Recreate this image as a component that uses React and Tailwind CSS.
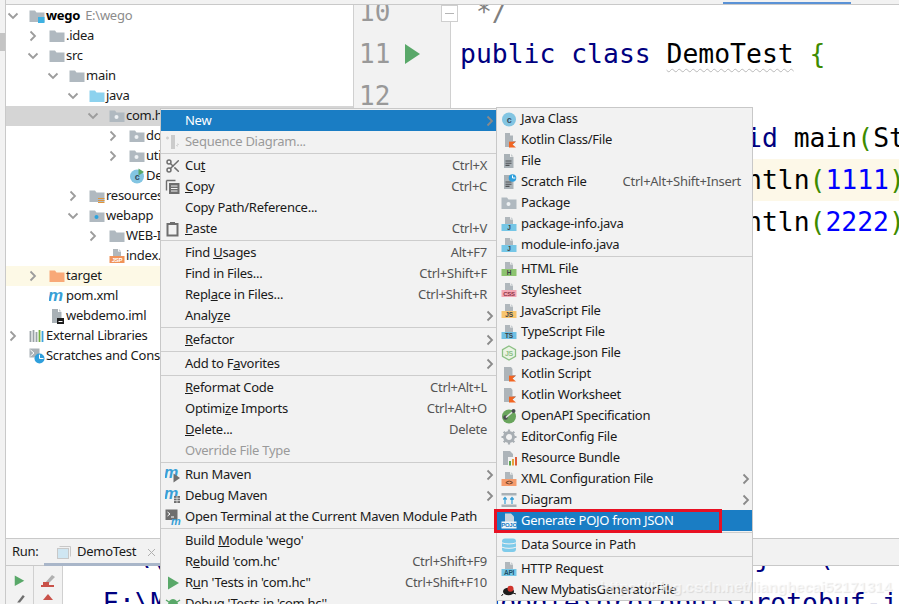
import React from 'react';
import { Scissors } from 'lucide-react';

const Chevron = ({ down, className = 'stroke-[#9c9c9c]' }) => (
  <svg width="12" height="12" viewBox="0 0 12 12" fill="none" className={className} strokeWidth="1.8">
    <path d={down ? 'M1.5 3.5 6 8l4.5-4.5' : 'M3.5 1.5 8 6l-4.5 4.5'} />
  </svg>
);

const Icon = ({ children }) => (
  <svg width="16" height="16" viewBox="0 0 16 16" className="shrink-0 font-[Liberation_Sans,sans-serif]">
    {children}
  </svg>
);

const folderPath = 'M0.5 2.5h5.5l1.5 2h8v9.5H0.5z';

const Folder = ({ fill = '#b0b9c0', children }) => (
  <Icon>
    <path d={folderPath} fill={fill} />
    {children}
  </Icon>
);

const PackageFolder = () => (
  <Folder>
    <circle cx="7.5" cy="9" r="2" fill="#eef1f3" />
  </Folder>
);

const docTop = (
  <>
    <path d="M4 1h5v2.5h3V8H4z" fill="#b0b7bc" />
    <path d="M9.8 1 12 3H9.8z" fill="#c9ced2" />
  </>
);

const Band = ({ fill, label, color = '#3c4043', size = 6.5 }) => (
  <Icon>
    {docTop}
    <rect x="0.5" y="8" width="15" height="7" fill={fill} />
    <text x="8" y="14" fontSize={size} fontWeight="700" fill={color} textAnchor="middle">{label}</text>
  </Icon>
);

const GrayDoc = ({ children }) => (
  <Icon>
    <path d="M3 1h6v3h3.5v11H3z" fill="#a9b1b6" />
    <path d="M10 1l2.5 2.5H10z" fill="#c4c9cc" />
    {children}
  </Icon>
);

const docLines = (
  <path d="M4.5 8h6M4.5 10.2h6M4.5 12.4h4" stroke="#4f5255" strokeWidth="1.1" />
);

const JavaClass = ({ run }) => (
  <Icon>
    <circle cx="8" cy="8.5" r="7" fill="#83c5e2" />
    <text x="8" y="11.5" fontSize="9" fontWeight="700" fill="#35495a" textAnchor="middle">c</text>
    {run && <path d="M9.5 0.5 15 4l-5.5 3.5z" fill="#59a869" />}
  </Icon>
);

const KotlinMark = () => (
  <path d="M8 15.5V9.5h7L11.5 12.5 15 15.5z" fill="#f26522" />
);

const KotlinDoc = ({ script }) => (
  <Icon>
    <path d={script ? 'M3 1h7l1.5 2v6H8v6H3z' : 'M4 1h5v2.5h3V9H8v6H4z'} fill="#adb4b9" />
    <path d="M8 15.5 15 9.5H8z" fill="#3c99dc" />
    <KotlinMark />
  </Icon>
);

const MavenM = ({ size = 13, x = 0, y = 12 }) => (
  <text x={x} y={y} fontSize={size} fontWeight="700" fontStyle="italic" fill="#389fd6">m</text>
);

const Clock = ({ cx, cy, r }) => (
  <>
    <circle cx={cx} cy={cy} r={r} fill="#2f9fdc" />
    <path d={`M${cx} ${cy - r + 1.2}V${cy}h${r - 1}`} stroke="#fff" strokeWidth="1" fill="none" />
  </>
);

const treeRows = [
  { pad: 'pl-0', open: true, icon: <Folder><rect x="9" y="9" width="6.5" height="6" fill="#3eb1e2" /></Folder>, text: <><b className="font-bold text-black">wego</b><span className="ml-[5px] text-[#8c8c8c]">E:\wego</span></> },
  { pad: 'pl-[20px]', closed: true, icon: <Folder />, text: '.idea' },
  { pad: 'pl-[20px]', open: true, icon: <Folder />, text: 'src' },
  { pad: 'pl-[40px]', open: true, icon: <Folder />, text: 'main' },
  { pad: 'pl-[60px]', open: true, icon: <Folder fill="#8dd2ee" />, text: 'java' },
  { pad: 'pl-[80px]', open: true, icon: <PackageFolder />, text: 'com.hc', row: 'bg-[#d5d5d5]' },
  { pad: 'pl-[100px]', closed: true, icon: <PackageFolder />, text: 'domain' },
  { pad: 'pl-[100px]', closed: true, icon: <PackageFolder />, text: 'utils' },
  { pad: 'pl-[100px]', icon: <JavaClass run />, text: 'DemoTest' },
  { pad: 'pl-[60px]', closed: true, icon: <Folder><path d="M9 10.5h6.5M9 12.5h6.5M9 14.5h6.5" stroke="#e0953a" strokeWidth="1" /></Folder>, text: 'resources' },
  { pad: 'pl-[60px]', open: true, icon: <Folder><circle cx="7.5" cy="9" r="2" fill="#2ba3dd" /></Folder>, text: 'webapp' },
  { pad: 'pl-[80px]', closed: true, icon: <Folder />, text: 'WEB-INF' },
  { pad: 'pl-[80px]', icon: <Band fill="#f0935a" label="JSP" color="#fff" size="6" />, text: 'index.jsp' },
  { pad: 'pl-[20px]', closed: true, icon: <Folder fill="#f8a978" />, text: 'target', row: 'bg-[#fdf9e6]' },
  { pad: 'pl-[20px]', icon: <Icon><MavenM size="17" x="-1" y="13" /></Icon>, text: 'pom.xml' },
  { pad: 'pl-[20px]', icon: <GrayDoc><rect x="8" y="10" width="7" height="6" fill="#1d1d1d" /><rect x="9.5" y="13" width="4" height="1" fill="#fff" /></GrayDoc>, text: 'webdemo.iml' },
  {
    pad: 'pl-0',
    closed: true,
    icon: (
      <Icon>
        <path d="M1.5 3v11M4.5 2v12M7.5 4v10" stroke="#9aa2a7" strokeWidth="1.8" />
        <path d="M10.5 2v12" stroke="#76b043" strokeWidth="1.8" />
        <path d="M13.5 3v11" stroke="#3ea3dc" strokeWidth="1.8" />
      </Icon>
    ),
    text: 'External Libraries',
  },
  {
    pad: 'pl-0',
    icon: (
      <Icon>
        <path d="M0.5 0.5h10v9h-10z" fill="#a9b1b6" />
        <path d="M1.5 2 5 5 1.5 8" stroke="#fff" fill="none" />
        <Clock cx="10.5" cy="10.5" r="5" />
      </Icon>
    ),
    text: 'Scratches and Consoles',
  },
];

const mainItems = [
  { label: 'New', arrow: true, active: true },
  {
    label: 'Sequence Diagram...',
    disabled: true,
    icon: (
      <Icon>
        <path d="M1 4h3M2.5 2.5v3" stroke="#cfcfcf" strokeWidth="1.4" />
        <rect x="6" y="1" width="4" height="14" fill="#cbcbcb" />
        <path d="M11 11h3l-1.5-2v4z" fill="#c4c4c4" />
      </Icon>
    ),
  },
  { sep: true },
  { label: <>Cu<u>t</u></>, shortcut: 'Ctrl+X', icon: <Scissors size={16} className="text-[#6e6e6e]" strokeWidth={2.2} /> },
  {
    label: <><u>C</u>opy</>,
    shortcut: 'Ctrl+C',
    icon: (
      <Icon>
        <path d="M1.5 1.5h9M1.5 1.5v10" stroke="#6e6e6e" strokeWidth="1.4" fill="none" />
        <rect x="4" y="4" width="10.5" height="11" fill="#6e6e6e" />
        <path d="M6 7h6.5M6 9.5h6.5M6 12h6.5" stroke="#f2f2f2" />
      </Icon>
    ),
  },
  { label: 'Copy Path/Reference...' },
  {
    label: <><u>P</u>aste</>,
    shortcut: 'Ctrl+V',
    icon: (
      <Icon>
        <rect x="2.5" y="3" width="10" height="11.5" fill="none" stroke="#6e6e6e" strokeWidth="2" />
        <rect x="5" y="1" width="5" height="3" fill="#6e6e6e" />
      </Icon>
    ),
  },
  { sep: true },
  { label: <>Find <u>U</u>sages</>, shortcut: 'Alt+F7' },
  { label: 'Find in Files...', shortcut: 'Ctrl+Shift+F' },
  { label: <>Repl<u>a</u>ce in Files...</>, shortcut: 'Ctrl+Shift+R' },
  { label: <>Analy<u>z</u>e</>, arrow: true },
  { sep: true },
  { label: <><u>R</u>efactor</>, arrow: true },
  { sep: true },
  { label: <>Add to F<u>a</u>vorites</>, arrow: true },
  { sep: true },
  { label: <><u>R</u>eformat Code</>, shortcut: 'Ctrl+Alt+L' },
  { label: <>Optimi<u>z</u>e Imports</>, shortcut: 'Ctrl+Alt+O' },
  { label: <><u>D</u>elete...</>, shortcut: 'Delete' },
  { label: 'Override File Type', disabled: true },
  { sep: true },
  { label: 'Run Maven', arrow: true, icon: <Icon><MavenM size="16" x="-1" y="11" /><path d="M8.5 6.5 15 11l-6.5 4.5z" fill="#6e6e6e" /></Icon> },
  {
    label: 'Debug Maven',
    arrow: true,
    icon: (
      <Icon>
        <MavenM size="16" x="-1" y="11" />
        <rect x="9" y="8" width="6" height="7" fill="#6e6e6e" />
        <path d="M9 10.3h6M9 12.6h6M12 8v7" stroke="#f2f2f2" strokeWidth="0.7" />
      </Icon>
    ),
  },
  {
    label: 'Open Terminal at the Current Maven Module Path',
    icon: (
      <Icon>
        <rect x="0.5" y="0.5" width="12" height="10.5" fill="#6e6e6e" />
        <path d="M2.5 3 5 5 2.5 7M6 8h3" stroke="#fff" fill="none" />
        <MavenM size="11" x="6" y="15.5" />
      </Icon>
    ),
  },
  { sep: true },
  { label: <>Build <u>M</u>odule 'wego'</> },
  { label: <>R<u>e</u>build 'com.hc'</>, shortcut: 'Ctrl+Shift+F9' },
  { label: <>R<u>u</u>n 'Tests in 'com.hc''</>, shortcut: 'Ctrl+Shift+F10', icon: <Icon><path d="M3 1.5 14 8 3 14.5z" fill="#59a869" /></Icon> },
  {
    label: "Debug 'Tests in 'com.hc''",
    icon: (
      <Icon>
        <ellipse cx="8" cy="9" rx="5" ry="6" fill="#59a869" />
        <path d="M1 4l3 2M15 4l-3 2M1 9h3M15 9h-3" stroke="#59a869" strokeWidth="1.4" />
      </Icon>
    ),
  },
];

const subItems = [
  { label: 'Java Class', icon: <JavaClass /> },
  { label: 'Kotlin Class/File', icon: <KotlinDoc /> },
  { label: 'File', icon: <GrayDoc>{docLines}</GrayDoc> },
  { label: 'Scratch File', shortcut: 'Ctrl+Alt+Shift+Insert', icon: <GrayDoc>{docLines}<Clock cx="11.5" cy="4" r="3.8" /></GrayDoc> },
  { label: 'Package', icon: <PackageFolder /> },
  { label: 'package-info.java', icon: <Band fill="#75c6e6" label="J" /> },
  { label: 'module-info.java', icon: <Band fill="#75c6e6" label="J" /> },
  { sep: true },
  { label: 'HTML File', icon: <Band fill="#8dc46f" label="H" /> },
  { label: 'Stylesheet', icon: <Band fill="#f3a6b3" label="CSS" color="#8c3344" size="6" /> },
  { label: 'JavaScript File', icon: <Band fill="#f8c56f" label="JS" /> },
  { label: 'TypeScript File', icon: <Band fill="#6fc0e4" label="TS" /> },
  {
    label: 'package.json File',
    icon: (
      <Icon>
        <path d="M8 1 14.5 4.7v6.6L8 15 1.5 11.3V4.7z" fill="#eaf3e4" stroke="#8cc084" strokeWidth="1.3" />
        <text x="8" y="11" fontSize="7" fontWeight="700" fill="#8cc084" textAnchor="middle">JS</text>
      </Icon>
    ),
  },
  { label: 'Kotlin Script', icon: <KotlinDoc script /> },
  { label: 'Kotlin Worksheet', icon: <KotlinDoc script /> },
  {
    label: 'OpenAPI Specification',
    icon: (
      <Icon>
        <circle cx="8" cy="8.5" r="7" fill="#69a55c" />
        <circle cx="4.5" cy="9.5" r="2.3" fill="#4b4f52" />
        <path d="M5 9.5 12 3.5" stroke="#e6e6e6" strokeWidth="1.5" />
        <circle cx="12.5" cy="3" r="2" fill="#4b4f52" />
      </Icon>
    ),
  },
  {
    label: 'EditorConfig File',
    icon: (
      <Icon>
        <circle cx="8" cy="8" r="4.5" fill="none" stroke="#a8aeb3" strokeWidth="3" />
        <path d="M8 0.5v3M8 12.5v3M0.5 8h3M12.5 8h3M2.7 2.7l2.1 2.1M11.2 11.2l2.1 2.1M13.3 2.7l-2.1 2.1M4.8 11.2l-2.1 2.1" stroke="#a8aeb3" strokeWidth="2.2" />
      </Icon>
    ),
  },
  {
    label: 'Resource Bundle',
    icon: (
      <Icon>
        <path d="M2 1h7l3 3v3H7v8H2z" fill="#adb4b9" />
        <rect x="8" y="11" width="2" height="4.5" fill="#5aa64f" />
        <rect x="11" y="9" width="2" height="6.5" fill="#e7a23a" />
        <rect x="14" y="7" width="2" height="8.5" fill="#e05d3a" />
      </Icon>
    ),
  },
  { label: 'XML Configuration File', arrow: true, icon: <Band fill="#f59b6c" label="<>" color="#6b3a20" /> },
  {
    label: 'Diagram',
    arrow: true,
    icon: (
      <Icon>
        <rect x="0.5" y="1" width="15" height="2.5" fill="#a9b1b6" />
        <rect x="0.5" y="12.5" width="15" height="2.5" fill="#a9b1b6" />
        <path d="M4 12V6M2.3 7.5 4 5.5l1.7 2M11 12V6M9.3 7.5l1.7-2 1.7 2" stroke="#389fd6" strokeWidth="1.2" fill="none" />
      </Icon>
    ),
  },
  {
    label: 'Generate POJO from JSON',
    active: true,
    icon: (
      <Icon>
        <path d="M4 0.5h6l3 3V9H4z" fill="#c9d5df" />
        <rect x="0.5" y="8.5" width="15" height="7" fill="#f2f6f9" />
        <text x="8" y="14.3" fontSize="6" fontWeight="700" fill="#1a7dc4" textAnchor="middle">POJO</text>
      </Icon>
    ),
  },
  { sep: true },
  {
    label: 'Data Source in Path',
    icon: (
      <Icon>
        <rect x="1" y="1.5" width="14" height="13.5" rx="3" fill="#7fcbea" />
        <path d="M1 5.8c3 1.5 11 1.5 14 0M1 10.2c3 1.5 11 1.5 14 0" stroke="#f2f2f2" fill="none" />
      </Icon>
    ),
  },
  { sep: true },
  { label: 'HTTP Request', icon: <Band fill="#75c6e6" label="API" color="#1d4f68" /> },
  {
    label: 'New MybatisGeneratorFile',
    icon: (
      <Icon>
        <ellipse cx="7.5" cy="9.5" rx="5.5" ry="3.8" fill="#1d1d1d" />
        <circle cx="9.5" cy="6.8" r="3" fill="#d0342c" />
        <path d="M2 12 0.5 14M12 11l3 1" stroke="#1d1d1d" />
      </Icon>
    ),
  },
];

const Menu = ({ items, className, arrowSlot }) => (
  <div className={`absolute bg-[#f2f2f2] border border-[#c8c8c8] text-[#1a1a1a] ${className}`}>
    {items.map((item, i) =>
      item.sep ? (
        <div key={i} className="h-[3px] flex items-center">
          <div className="h-px w-full bg-[#cdcdcd]" />
        </div>
      ) : (
        <div
          key={i}
          className={`h-[21px] flex items-center pl-[4px] whitespace-nowrap ${item.active ? 'bg-[#1a7dc4] text-white' : ''} ${item.disabled ? 'text-[#9a9a9a]' : ''}`}
        >
          <span className="w-[16px] h-[16px] mr-[4px] shrink-0 flex items-center justify-center">{item.icon}</span>
          <span className="flex-1">{item.label}</span>
          {item.shortcut && <span className="text-[#555]">{item.shortcut}</span>}
          <span className={`${arrowSlot} shrink-0 flex justify-end`}>
            {item.arrow && <Chevron className="stroke-[#8a8a8a] shrink-0" />}
          </span>
        </div>
      )
    )}
  </div>
);

const gutterLines = [10, 11, 12, 13, 14, 15, 16, 17];

const App = () => {
  return (
    <div className="relative w-[899px] h-[604px] overflow-hidden bg-white flex font-['Noto_Sans',sans-serif] text-[13px] tracking-[-0.27px] text-[#1a1a1a]">
      <div className="w-[6px] shrink-0 bg-[#f2f2f2] border-r border-[#c9c9c9] pt-[33px]">
        <div className="h-[18px] bg-[#c4c4c4]" />
      </div>

      <div className="flex-1 min-w-0 flex flex-col">
        <div className="h-[5px] shrink-0 bg-[#f2f2f2] border-b border-[#c9c9c9] pl-[717px] pt-[2px]">
          <div className="w-[128px] h-[2px] bg-[#5a92d6]" />
        </div>

        <div className="h-[533px] shrink-0 flex overflow-hidden">
          <div className="w-[347px] shrink-0 pt-px">
            {treeRows.map((r, i) => (
              <div key={i} className={`h-[20px] flex items-center whitespace-nowrap ${r.pad} ${r.row || ''}`}>
                <span className="w-[23px] shrink-0 pl-[1px] flex items-center">
                  {(r.open || r.closed) && <Chevron down={r.open} />}
                </span>
                <span className="w-[17px] shrink-0">{r.icon}</span>
                <span>{r.text}</span>
              </div>
            ))}
          </div>

          <div className="relative w-[98px] shrink-0 bg-[#f2f2f2] border-l border-r border-[#d0d0d0] -mt-[14px] font-['DejaVu_Sans_Mono',monospace] text-[26px] tracking-normal text-[#999]">
            {gutterLines.map((n) => (
              <div key={n} className="h-[42px] flex items-center pl-[5px]">
                <span>{n}</span>
                {n === 11 && (
                  <svg width="15" height="20" viewBox="0 0 15 20" className="ml-[15px]">
                    <path d="M0 0 15 10 0 20z" fill="#59a869" />
                  </svg>
                )}
              </div>
            ))}
            <div className="absolute -right-[8px] top-[14px] w-[17px] h-[17px] bg-white border border-[#cfcfcf] flex items-center justify-center">
              <div className="w-[9px] h-px bg-[#b5b5b5]" />
            </div>
          </div>

          <div className="flex-1 min-w-0 pl-[9px] -mt-[14px] font-['DejaVu_Sans_Mono',monospace] text-[26.4px] tracking-normal leading-[42px] whitespace-pre overflow-hidden">
            <div className="text-[#808080]"> */</div>
            <div>
              <span className="text-[#000080]">public class </span>
              <span className="text-black underline decoration-wavy decoration-[#b9b9b9] decoration-1 underline-offset-[5px]">DemoTest</span>
              <span className="text-[#3d8b00]"> {'{'}</span>
            </div>
            <div>&nbsp;</div>
            <div className="text-black">
              <span className="text-[#000080]">  public static void </span>main<span className="text-[#3d8b00]">(</span>String[] args<span className="text-[#3d8b00]">)</span>
            </div>
            <div className="text-black bg-[#fdf8e8] -ml-[9px] pl-[9px]">
              {'    System.out.println'}<span className="text-[#3d8b00]">(</span><span className="text-[#0000ff]">1111</span><span className="text-[#3d8b00]">)</span>;
            </div>
            <div className="text-black">
              {'    System.out.println'}<span className="text-[#3d8b00]">(</span><span className="text-[#0000ff]">2222</span><span className="text-[#3d8b00]">)</span>;
            </div>
          </div>
        </div>

        <div className="flex-1 min-h-0 flex flex-col">
          <div className="h-[28px] shrink-0 bg-[#f2f2f2] border-t border-b border-[#c9c9c9] flex items-center pl-[6px]">
            <span className="w-[32px] shrink-0">Run:</span>
            <div className="relative h-full w-[116px] shrink-0 flex items-center pl-[13px] gap-[6px]">
              <svg width="14" height="13" viewBox="0 0 14 13">
                <path d="M2.5 0.5h11v10" stroke="#c8c8c8" fill="none" />
                <rect x="0.5" y="2.5" width="11" height="10" fill="#cfe6f2" stroke="#c8c8c8" />
              </svg>
              <span>DemoTest</span>
              <svg width="9" height="9" viewBox="0 0 9 9" className="ml-[5px]">
                <path d="M1 1l7 7M8 1 1 8" stroke="#b0b0b0" />
              </svg>
              <div className="absolute left-0 right-0 -bottom-px h-[3px] bg-[#a9b6c9]" />
            </div>
          </div>
          <div className="flex-1 min-h-0 flex overflow-hidden">
            <div className="w-[28px] shrink-0 bg-[#f2f2f2] border-r border-[#d0d0d0] flex flex-col items-center pt-[9px] gap-[8px]">
              <svg width="11" height="12" viewBox="0 0 11 12"><path d="M0.5 0.5 10.5 6 0.5 11.5z" fill="#59a869" /></svg>
              <svg width="12" height="10" viewBox="0 0 12 10"><path d="M3 9 9 1l2 1.5L6 9z" fill="#6e6e6e" /></svg>
            </div>
            <div className="w-[29px] shrink-0 bg-[#f2f2f2] border-r border-[#d0d0d0] flex flex-col items-center pt-[8px] gap-[6px]">
              <svg width="16" height="14" viewBox="0 0 16 14">
                <path d="M5 9 12 1l3 2-6 6z" fill="#b0b0b0" />
                <path d="M3 8h6v3H3z" fill="#c9524a" />
                <rect x="1" y="11" width="13" height="2" fill="#c9524a" />
              </svg>
              <svg width="10" height="8" viewBox="0 0 10 8"><path d="M5 0 10 6H0z" fill="#c9524a" /></svg>
            </div>
            <div className="flex-1 min-w-0 pl-[40px] -mt-[32px] font-['DejaVu_Sans_Mono',monospace] text-[26.4px] tracking-normal leading-[46px] text-[#000080] whitespace-pre overflow-hidden">
              <div>{'E:\\(x86)\\Java\\jdk1.8.0_71\\jre\\bin\\tools  java(Str'}</div>
              <div>{'E:\\Maven\\repository\\com\\google\\protobuf\\protobuf-java'}</div>
            </div>
          </div>
        </div>
      </div>

      <Menu items={mainItems} className="left-[160px] top-[108px] w-[337px] h-[500px] pt-px" arrowSlot="w-[9px]" />
      <Menu items={subItems} className="left-[496px] top-[107px] w-[257px] h-[494px]" arrowSlot="w-[11px]" />

      <div className="absolute left-[494px] top-[509px] w-[228px] h-[24px] border-[3px] border-[#e81123]" />
      <div className="absolute left-[600px] top-[576px] font-['Liberation_Sans',sans-serif] font-bold text-[15px] tracking-normal text-white/60 [text-shadow:1px_1px_1px_rgba(0,0,0,0.1)] whitespace-nowrap">
        https://blog.csdn.net/lianghecai52171314
      </div>
    </div>
  );
};

export default App;
